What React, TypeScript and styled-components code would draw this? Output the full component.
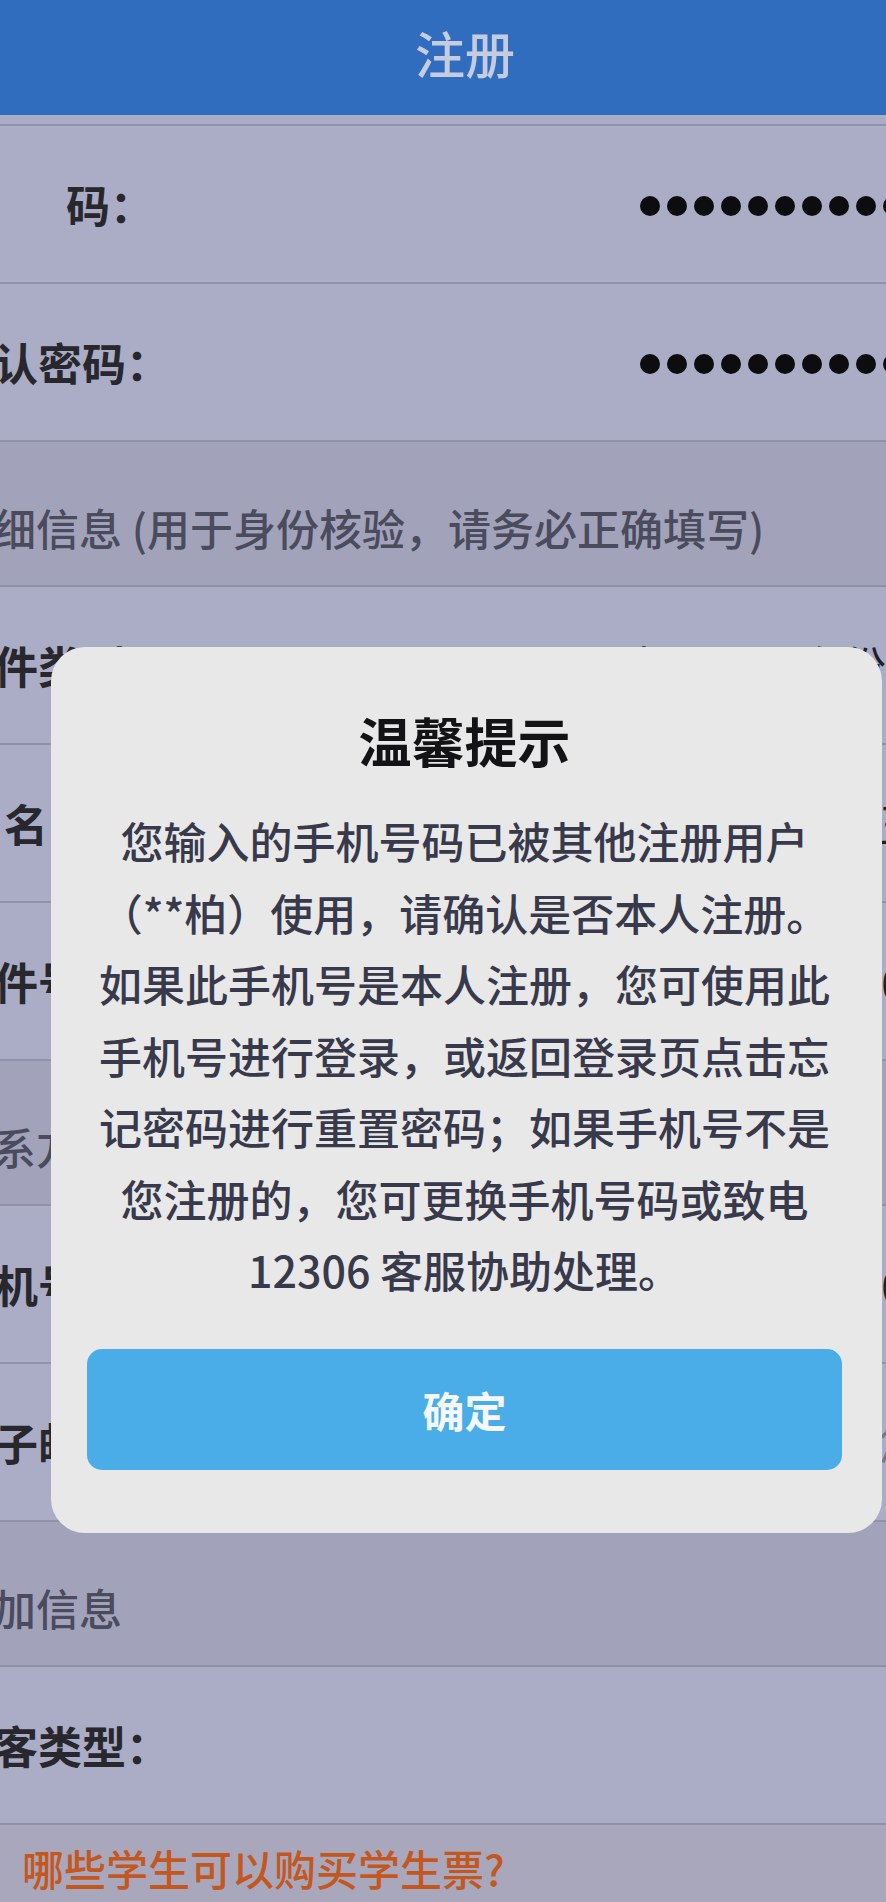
import React from 'react'
import styled, { createGlobalStyle } from 'styled-components'

const GlobalStyle = createGlobalStyle`
  html, body {
    margin: 0;
    padding: 0;
  }
  body {
    font-family: "Noto Sans CJK SC", "Noto Sans", sans-serif;
    background: #aaadc5;
  }
  * {
    box-sizing: border-box;
  }
`

const Page = styled.div`
  position: relative;
  width: 886px;
  height: 1902px;
  overflow: hidden;
  display: flex;
  flex-direction: column;
  background: #aaadc5;
`

const Header = styled.header`
  flex: none;
  height: 115px;
  background: #316dbf;
  display: flex;
  align-items: center;
  justify-content: center;
  padding: 0 0 11px 44px;
`

const HeaderTitle = styled.h1`
  margin: 0;
  font-size: 50px;
  line-height: 1;
  font-weight: 500;
  color: #c6cce0;
`

const Strip = styled.div`
  flex: none;
  height: 11px;
  border-bottom: 2px solid #9092a9;
`

const Row = styled.div`
  flex: none;
  height: 158px;
  display: flex;
  align-items: center;
  overflow: hidden;
  white-space: nowrap;
  border-bottom: 2px solid #9092a9;
`

const Section = styled.div`
  flex: none;
  height: 145px;
  padding-top: 60px;
  overflow: hidden;
  white-space: nowrap;
  background: #a2a3ba;
  border-bottom: 2px solid #9092a9;
`

const SectionText = styled.div`
  margin-left: -50px;
  font-size: 43px;
  line-height: 50px;
  font-weight: 500;
  color: #4a4b5d;
`

const LabelCell = styled.div`
  flex: 0 0 622px;
`

const Label = styled.span<{ $offset: number }>`
  display: inline-block;
  margin-left: ${p => p.$offset}px;
  font-size: 44px;
  line-height: 50px;
  font-weight: 700;
  color: #27272d;
`

const Value = styled.span<{ $muted?: boolean; $shift?: number }>`
  flex: none;
  margin-left: ${p => p.$shift ?? 0}px;
  font-size: 44px;
  line-height: 50px;
  color: ${p => (p.$muted ? '#75778b' : '#1e1e24')};
`

const Masked = styled.div`
  flex: none;
  display: flex;
  gap: 7px;
  margin: 4px 0 0 18px;
`

const Dot = styled.span`
  flex: none;
  width: 20px;
  height: 20px;
  border-radius: 50%;
  background: #0d0d10;
`

const LinkArea = styled.div`
  flex: 1;
  padding: 18px 0 0 22px;
  background: #a9a7bc;
  white-space: nowrap;
`

const StudentLink = styled.a`
  font-size: 42px;
  line-height: 50px;
  font-weight: 500;
  color: #c2581f;
  text-decoration: none;
`

const Dialog = styled.div`
  position: absolute;
  top: 647px;
  left: 51px;
  width: 831px;
  padding: 58px 40px 63px 36px;
  border-radius: 34px;
  background: #e8e8e9;
`

const DialogTitle = styled.h2`
  margin: 0 0 30px;
  font-size: 53px;
  line-height: 70px;
  font-weight: 700;
  text-align: center;
  color: #131315;
`

const Message = styled.div`
  font-size: 43px;
  line-height: 71.5px;
  font-weight: 500;
  color: #383a4c;
  text-align: center;
`

const MessageLine = styled.div`
  white-space: nowrap;
`

const ConfirmButton = styled.button`
  display: block;
  width: 100%;
  height: 121px;
  margin-top: 43px;
  border: none;
  border-radius: 15px;
  background: #4aade8;
  color: #f4f8fc;
  font-family: inherit;
  font-size: 42px;
  font-weight: 700;
  cursor: pointer;
`

const messageLines = [
  '您输入的手机号码已被其他注册用户',
  '（**柏）使用，请确认是否本人注册。',
  '如果此手机号是本人注册，您可使用此',
  '手机号进行登录，或返回登录页点击忘',
  '记密码进行重置密码；如果手机号不是',
  '您注册的，您可更换手机号码或致电',
  '12306 客服协助处理。',
]

const PasswordDots = () => (
  <Masked>
    {Array.from({ length: 11 }).map((_, i) => (
      <Dot key={`dot${i}`} />
    ))}
  </Masked>
)

const App = () => {
  return (
    <>
      <GlobalStyle />
      <Page>
        <Header>
          <HeaderTitle>注册</HeaderTitle>
        </Header>
        <Strip />

        <Row>
          <LabelCell><Label $offset={66}>码：</Label></LabelCell>
          <PasswordDots />
        </Row>
        <Row>
          <LabelCell><Label $offset={-50}>确认密码：</Label></LabelCell>
          <PasswordDots />
        </Row>

        <Section>
          <SectionText>详细信息 (用于身份核验，请务必正确填写)</SectionText>
        </Section>

        <Row>
          <LabelCell><Label $offset={-50}>证件类型：</Label></LabelCell>
          <Value>中国居民身份证</Value>
        </Row>
        <Row>
          <LabelCell><Label $offset={4}>名：</Label></LabelCell>
          <Value $shift={169}>何晓玉</Value>
        </Row>
        <Row>
          <LabelCell><Label $offset={-50}>证件号码：</Label></LabelCell>
          <Value $shift={15}>440106199001011234</Value>
        </Row>

        <Section>
          <SectionText>联系方式</SectionText>
        </Section>

        <Row>
          <LabelCell><Label $offset={-50}>手机号码：</Label></LabelCell>
          <Value $shift={15}>13800138000</Value>
        </Row>
        <Row>
          <LabelCell><Label $offset={-50}>电子邮箱：</Label></LabelCell>
          <Value $muted $shift={125}>请输入您的邮箱</Value>
        </Row>

        <Section>
          <SectionText>附加信息</SectionText>
        </Section>

        <Row>
          <LabelCell><Label $offset={-50}>旅客类型：</Label></LabelCell>
        </Row>

        <LinkArea>
          <StudentLink href="#">哪些学生可以购买学生票?</StudentLink>
        </LinkArea>

        <Dialog role="dialog" aria-label="温馨提示">
          <DialogTitle>温馨提示</DialogTitle>
          <Message>
            {messageLines.map((line, idx) => (
              <MessageLine key={`line${idx}`}>{line}</MessageLine>
            ))}
          </Message>
          <ConfirmButton type="button">确定</ConfirmButton>
        </Dialog>
      </Page>
    </>
  )
}

export default App
